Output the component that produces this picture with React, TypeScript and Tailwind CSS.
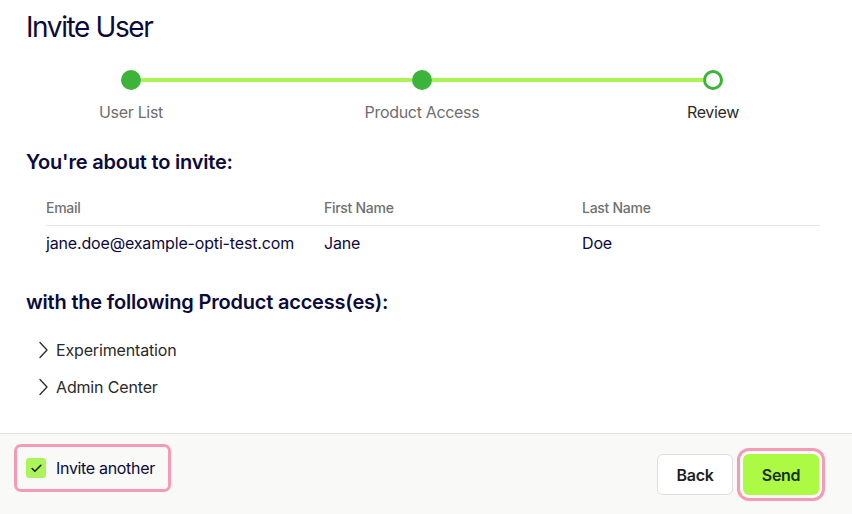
import { Check } from 'lucide-react';

const steps = [
  { label: 'User List', done: true },
  { label: 'Product Access', done: true },
  { label: 'Review', done: false },
];

const products = ['Experimentation', 'Admin Center'];

const Chevron = () => (
  <svg width="11" height="18" viewBox="0 0 11 18" fill="none" className="shrink-0">
    <path d="M2 1.5 L9 9 L2 16.5" stroke="#2a2a2a" strokeWidth="1.3" strokeLinecap="round" strokeLinejoin="round" />
  </svg>
);

const StepDot = ({ done }: { done: boolean }) =>
  done ? (
    <div className="w-5 h-5 rounded-full bg-[#3cb43a] shrink-0" />
  ) : (
    <div className="w-5 h-5 rounded-full border-[3px] border-[#3cb43a] bg-white shrink-0" />
  );

const App = () => {
  return (
    <div className="w-[852px] h-[514px] flex flex-col bg-white font-['Inter',sans-serif] overflow-hidden">
      <div className="flex-1 px-[26px]">
        <h1 className="pt-[10px] text-[28px] leading-[34px] tracking-[-0.05em] text-[#0b0a3a]">Invite User</h1>

        {/* stepper */}
        <div className="mt-[26px] ml-[95px] w-[602px] h-5 flex items-center">
          <StepDot done />
          <div className="flex-1 h-1 bg-[#a8f552]" />
          <StepDot done />
          <div className="flex-1 h-1 bg-[#a8f552]" />
          <StepDot done={false} />
        </div>
        <div className="mt-[10px] ml-[25px] w-[742px] flex justify-between">
          {steps.map((s, i) => (
            <div
              key={s.label}
              className={`w-[160px] text-center text-[16px] leading-6 tracking-[-0.02em] ${
                i === steps.length - 1 ? 'text-[#2b2b2b]' : 'text-[#6e6e6e]'
              }`}
            >
              {s.label}
            </div>
          ))}
        </div>

        <h2 className="mt-[24px] text-[20px] leading-7 font-semibold tracking-[-0.01em] text-[#0b0a3a]">
          You're about to invite:
        </h2>

        {/* invite table */}
        <div className="mt-[22px] ml-[20px] w-[774px]">
          <div className="grid grid-cols-[278px_258px_1fr] pb-[7px] border-b border-[#e6e8e3] text-[14px] leading-5 font-medium tracking-[-0.02em] text-[#707070]">
            <div>Email</div>
            <div>First Name</div>
            <div>Last Name</div>
          </div>
          <div className="grid grid-cols-[278px_258px_1fr] pt-[5px] text-[16px] leading-6 tracking-[-0.01em] text-[#0b0a3a]">
            <div>jane.doe@example-opti-test.com</div>
            <div>Jane</div>
            <div>Doe</div>
          </div>
        </div>

        <h2 className="mt-[33px] text-[20px] leading-7 font-semibold tracking-[-0.01em] text-[#0b0a3a]">
          with the following Product access(es):
        </h2>

        <ul className="mt-[22px] ml-[12px] flex flex-col gap-[13px]">
          {products.map((p) => (
            <li key={p} className="flex items-center gap-[7px] text-[16px] leading-6 tracking-[-0.01em] text-[#2a2a2a]">
              <Chevron />
              {p}
            </li>
          ))}
        </ul>
      </div>

      {/* footer */}
      <div className="h-[81px] border-t border-[#e2e3df] bg-[#f9faf8] flex items-start justify-between pl-[14px] pr-[33px]">
        <label className="mt-[10px] w-[157px] h-[48px] rounded-[7px] border-[3px] border-[#f59bb6] flex items-center pl-[9px] gap-[10px]">
          <span className="w-5 h-5 rounded-[3px] bg-[#abf55b] flex items-center justify-center">
            <Check size={13} strokeWidth={3} color="#1b1b1b" />
          </span>
          <span className="text-[16px] leading-6 tracking-[-0.02em] text-[#0b0a3a]">Invite another</span>
        </label>
        <div className="mt-[20px] flex gap-[10px]">
          <button className="w-[76px] h-[41px] rounded-[6px] border border-[#dedfdc] bg-white text-[16px] font-semibold tracking-[-0.02em] text-[#1f1f1f]">
            Back
          </button>
          <button className="w-[76px] h-[41px] rounded-[6px] bg-[#adfa45] text-[16px] font-semibold tracking-[-0.02em] text-[#16301a] ring-[3px] ring-[#f59bb6] ring-offset-[3px] ring-offset-[#f9faf8]">
            Send
          </button>
        </div>
      </div>
    </div>
  );
};

export default App;
